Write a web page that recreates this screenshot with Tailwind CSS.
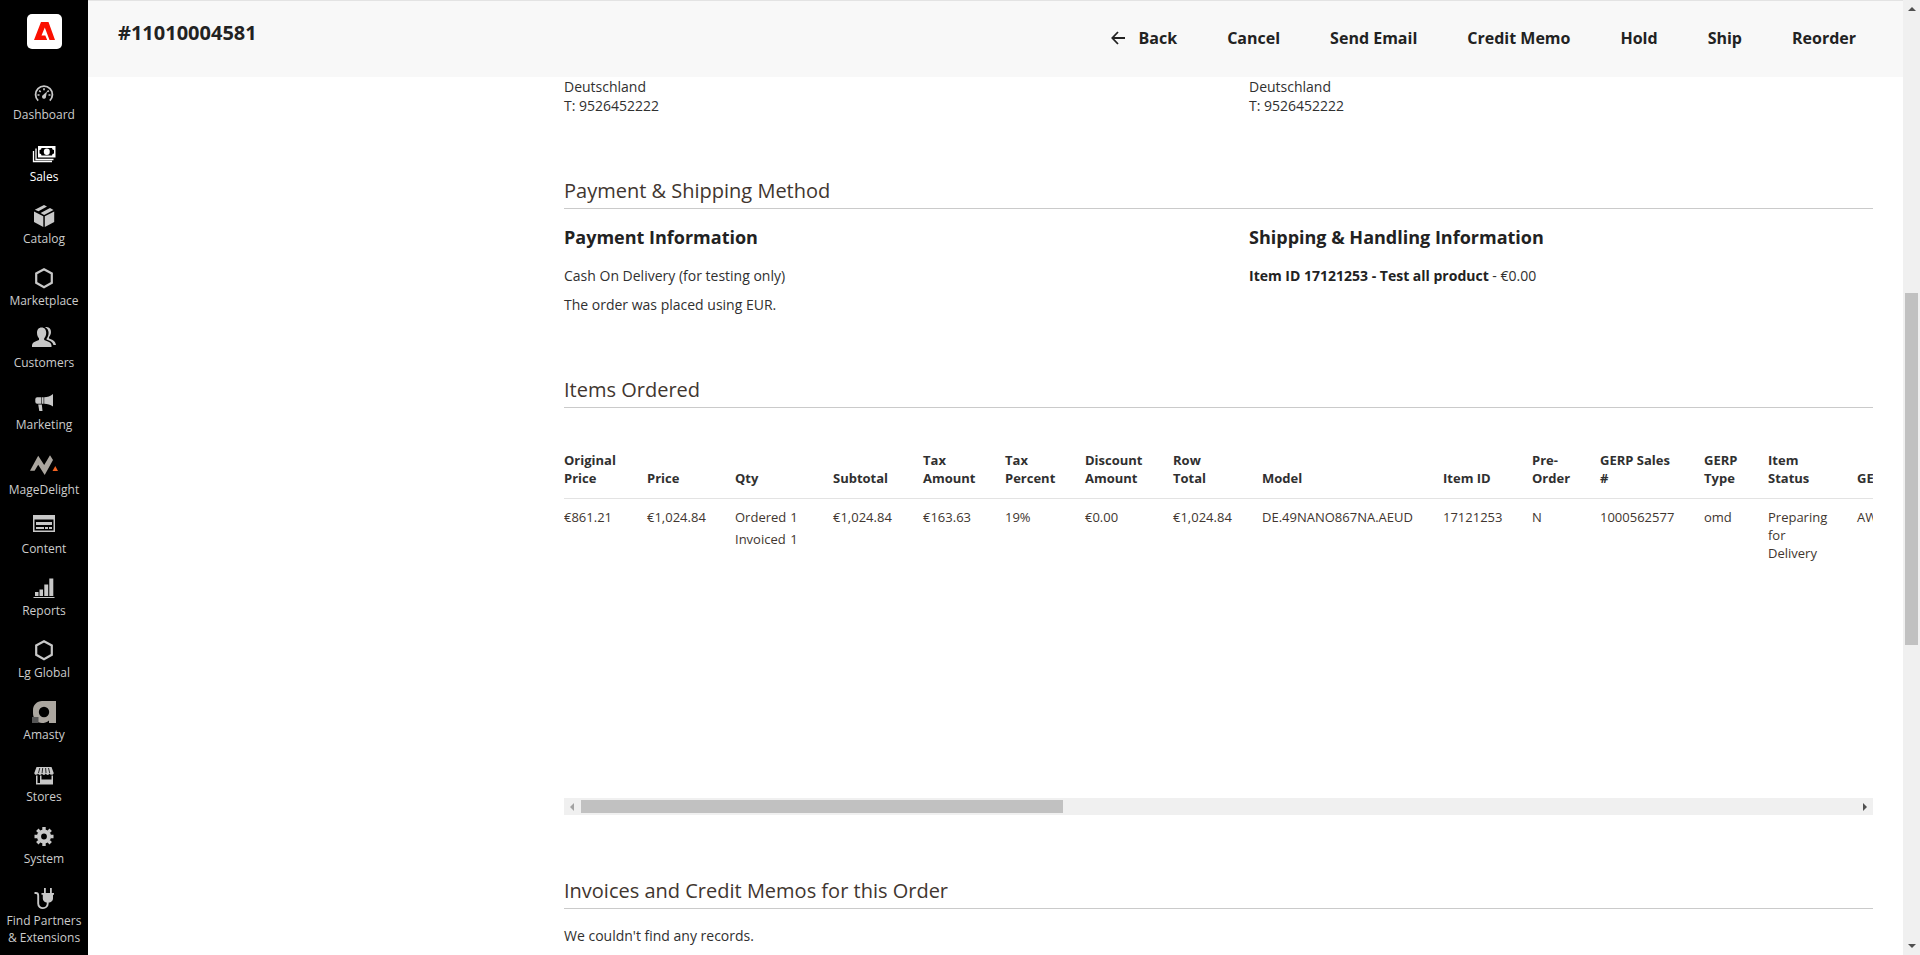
<!DOCTYPE html>
<html lang="en">
<head>
<meta charset="utf-8">
<title>#11010004581</title>
<script src="https://cdn.jsdelivr.net/npm/@tailwindcss/browser@4"></script>
</head>
<body class="flex h-screen overflow-hidden bg-white font-['Open_Sans',sans-serif] text-sm leading-[19px] text-[#303030]">

<nav aria-label="Main menu" class="flex w-[88px] shrink-0 flex-col items-center bg-black text-xs leading-[17px] text-[#cccccc]">
  <a href="#" aria-label="Home" class="mt-[14px] mb-[29px]">
    <svg class="block h-[35px] w-[35px]" viewBox="0 0 35 35"><rect width="35" height="35" rx="5" fill="#fff"/><path d="M14 8h7.500L28 26h-5.500L17.800 13.500l-3.300 8h3.800l1.900 4.500H7z" fill="#fa0f00"/></svg>
  </a>
  <ul class="flex w-full flex-col gap-[17px] text-center">
    <li><a href="#" class="flex flex-col items-center">
      <svg class="h-7 w-7" viewBox="0 0 28 28" fill="none" stroke="#c8c8c8"><path d="M8.200 22.600A8.400 8.400 0 1 1 19.800 22.600" stroke-width="1.800"/><path d="M7.500 17h2M18.500 17h2M9.200 12.600l1.500 1.200M18.800 12.600l-1.500 1.200M14 10.200v2" stroke-width="1.700"/><path d="M17 13.500l-1 5a2 2 0 1 1-3-1.500z" fill="#c8c8c8" stroke="none"/></svg>
      Dashboard</a></li>
    <li><a href="#" class="flex flex-col items-center text-white">
      <svg class="h-7 w-7" viewBox="0 0 28 28"><path d="M8 6h17.500v11.500H8z" fill="#fff"/><path d="M11.500 8h10.500a2 2 0 0 0 2 2v3.500a2 2 0 0 0-2 2H11.500a2 2 0 0 0-2-2V10a2 2 0 0 0 2-2z" fill="#000"/><ellipse cx="16.800" cy="11.800" rx="3" ry="3.200" fill="#fff"/><path d="M6 8.500v11h17.500M3.500 11v10.500H22" fill="none" stroke="#fff" stroke-width="1.300"/></svg>
      Sales</a></li>
    <li><a href="#" class="flex flex-col items-center">
      <svg class="h-7 w-7" viewBox="0 0 28 28" fill="#c8c8c8"><path d="M4 9.500l9.300 4.700V25L4 20zM24.200 9.500l-9.400 4.700V25l9.400-5z"/><path d="M14 3l3 1.500-8.500 4.700-3.700-1.400zM20 6l3.500 1.900-9.400 5-3.500-1.800z"/></svg>
      Catalog</a></li>
    <li><a href="#" class="flex flex-col items-center">
      <svg class="h-7 w-7" viewBox="0 0 28 28"><path d="M14 5.200l7.800 4.300v9.300L14 23.200l-7.800-4.400V9.500z" fill="none" stroke="#c8c8c8" stroke-width="2.200"/></svg>
      Marketplace</a></li>
    <li><a href="#" class="flex flex-col items-center">
      <svg class="h-7 w-7" viewBox="0 0 28 28" fill="#c8c8c8"><path d="M11.600 1.500c3 0 4.600 2.200 4.600 5.300 0 2.300-.8 4.200-2 5.500v1.800c3.600 1.200 6.800 2.300 7.300 5.200V21H2v-1.700c.5-2.900 3.500-4 7-5.200v-1.800c-1.200-1.300-2-3.200-2-5.500 0-3.100 1.600-5.300 4.600-5.300z"/><path d="M15 1.200c4-.9 6 1.600 6 4.800 0 2.100-.8 3.800-2 5v1.400c3.500 1.200 6.500 2.300 7 6.600h-2.500c-.8-3.300-3.300-4.500-7-5.600v-.6c1.300-1.500 2.100-3.600 2.100-6 0-2.400-1.100-4.400-3.600-5.600z"/></svg>
      Customers</a></li>
    <li><a href="#" class="flex flex-col items-center">
      <svg class="h-7 w-7" viewBox="0 0 28 28" fill="#c8c8c8"><path d="M11 9.300v6.500H7.200a2 2 0 0 1-1.900-2v-2.500a2 2 0 0 1 1.900-2zM11.600 9.300h2v6.500h-2zM14.200 9.200c3.400 0 6-1 8.800-3.200v12.500c-2.800-1.800-5.400-2.700-8.800-2.700zM8.200 16.500h3.600l.7 6.500H9.300z"/></svg>
      Marketing</a></li>
    <li><a href="#" class="flex flex-col items-center">
      <svg class="h-[31px] w-7" viewBox="0 0 28 31"><path d="M0 20.700L8.200 5.700 14.200 15 20 5.300 23 10 14.700 25 8.200 14.700 4.600 20.700z" fill="#aba69f"/><path d="M25.300 16L28 21h-5.500z" fill="#f26322"/></svg>
      MageDelight</a></li>
    <li><a href="#" class="flex flex-col items-center">
      <svg class="h-[25px] w-7" viewBox="0 0 28 25"><path fill="#c8c8c8" fill-rule="evenodd" d="M3 0h22v17H3zM4.500 4.500v11h19v-11z"/><path fill="#c8c8c8" d="M6 7h16v3H6zM6 12h8v2H6zM15 12h3v2h-3zM19 12h3v2h-3z"/></svg>
      Content</a></li>
    <li><a href="#" class="flex flex-col items-center">
      <svg class="h-7 w-7" viewBox="0 0 28 28" fill="#c8c8c8"><path d="M3.500 23h21v1h-21zM5 18h3.500v4H5zM9.500 15.500H13V22H9.500zM14.300 10.500h3.900V22h-3.900zM19.300 4.500h4V22h-4z"/></svg>
      Reports</a></li>
    <li><a href="#" class="flex flex-col items-center">
      <svg class="h-7 w-7" viewBox="0 0 28 28"><path d="M14 5.200l7.800 4.300v9.300L14 23.200l-7.800-4.400V9.500z" fill="none" stroke="#c8c8c8" stroke-width="2.200"/></svg>
      Lg Global</a></li>
    <li><a href="#" class="flex flex-col items-center">
      <svg class="h-7 w-7" viewBox="0 0 28 28"><path d="M12 3h14v22h-7v-2.500c-2 2-5 2.500-7 2.500-5 0-9-4-9-10V12c0-5 4-9 9-9z" fill="#aba69f"/><circle cx="14" cy="14" r="5.200" fill="#000"/><path d="M2 19h6.500v6H2z" fill="#555"/></svg>
      Amasty</a></li>
    <li><a href="#" class="flex flex-col items-center">
      <svg class="h-7 w-7" viewBox="0 0 28 28"><path d="M6.500 7h15l2.200 6c0 2-3.200 2.500-4 .6-.8 1.800-3.300 1.800-3.900 0-.6 1.800-3.200 1.800-3.800 0-.8 1.800-3.200 1.800-4 0-.8 1.900-3.800 1.400-3.700-.6z" fill="#c8c8c8"/><path d="M9.800 8l-1.300 5M12.700 8l-.6 5M15.600 8l.4 5M18.500 8l1.200 5" stroke="#000" stroke-width=".8"/><path fill="#c8c8c8" fill-rule="evenodd" d="M6 15.500h1.500V23H10v-7.500h1.500v4h10v-4H23v9H6z"/></svg>
      Stores</a></li>
    <li><a href="#" class="flex flex-col items-center">
      <svg class="h-7 w-7" viewBox="0 0 28 28"><circle cx="14" cy="14.500" r="5" fill="none" stroke="#c8c8c8" stroke-width="4.200"/><path d="M14 5v3M14 21v3M4.500 14.500h3M20.500 14.500h3M7.300 7.800l2.100 2.100M18.600 19.100l2.100 2.100M20.700 7.800l-2.100 2.100M9.400 19.100l-2.100 2.100" stroke="#c8c8c8" stroke-width="3.400"/></svg>
      System</a></li>
    <li><a href="#" class="flex flex-col items-center">
      <svg class="h-7 w-7" viewBox="0 0 28 28"><path d="M11.500 9h12.500v1.700h-1v3.800c0 2-1.500 3.500-3.500 4h-3.200c-2-.5-3.500-2-3.500-4v-3.800h-1.300zM14 4h1.800v5H14zM20 4h1.800v5H20z" fill="#c8c8c8"/><path d="M4.500 9h1.300a2.400 2.400 0 0 1 2.400 2.400V19.500c0 6.200 9.500 6 9.500 0v-2" fill="none" stroke="#c8c8c8" stroke-width="1.900"/></svg>
      Find Partners<br>&amp; Extensions</a></li>
  </ul>
</nav>

<div class="flex min-w-0 flex-1 flex-col">
  <header class="flex h-[77px] shrink-0 justify-between border-t border-[#e3e3e3] bg-[#f8f8f8] pr-[47px] pl-[30px] text-[#222]">
    <h1 class="pt-[18px] text-xl leading-[27px] font-bold">#11010004581</h1>
    <div class="flex h-[74px] items-center gap-[50px] text-base font-bold">
      <button type="button" class="flex items-center gap-[14px]"><svg class="h-[14px] w-[14px]" viewBox="0 0 14 14" fill="none" stroke="#222" stroke-width="1.800"><path d="M7 1L1.300 7 7 13M1.500 7H14"/></svg>Back</button>
      <button type="button">Cancel</button>
      <button type="button">Send Email</button>
      <button type="button">Credit Memo</button>
      <button type="button">Hold</button>
      <button type="button">Ship</button>
      <button type="button">Reorder</button>
    </div>
  </header>

  <div class="flex min-h-0 flex-1 overflow-hidden px-[30px]">
    <div class="w-[446px] shrink-0"></div>
    <main class="min-w-0 flex-1">
      <section class="grid grid-cols-2 gap-x-[61px]">
        <address class="not-italic">Deutschland<br>T: 9526452222</address>
        <address class="not-italic">Deutschland<br>T: 9526452222</address>
      </section>

      <section class="mt-[62px]">
        <h2 class="border-b border-[#cacaca] pb-1 text-xl leading-[27px] text-[#41362f]">Payment &amp; Shipping Method</h2>
        <div class="mt-4 grid grid-cols-2 gap-x-[61px]">
          <div>
            <h3 class="text-lg leading-6 font-bold text-[#222]">Payment Information</h3>
            <p class="mt-[17px]">Cash On Delivery (for testing only)</p>
            <p class="mt-[10px]">The order was placed using EUR.</p>
          </div>
          <div>
            <h3 class="text-lg leading-6 font-bold text-[#222]">Shipping &amp; Handling Information</h3>
            <p class="mt-[17px]"><strong class="font-bold text-[#222]">Item ID 17121253 - Test all product</strong> - €0.00</p>
          </div>
        </div>
      </section>

      <section class="mt-[62px]">
        <h2 class="border-b border-[#cacaca] pb-1 text-xl leading-[27px] text-[#41362f]">Items Ordered</h2>
        <div class="mt-[33px] h-[357px] overflow-hidden">
          <table class="w-[1353px] table-fixed text-left text-[13px] leading-[18px]">
            <colgroup>
              <col class="w-[83px]"><col class="w-[88px]"><col class="w-[98px]"><col class="w-[90px]"><col class="w-[82px]">
              <col class="w-[80px]"><col class="w-[88px]"><col class="w-[89px]"><col class="w-[181px]"><col class="w-[89px]">
              <col class="w-[68px]"><col class="w-[104px]"><col class="w-[64px]"><col class="w-[89px]"><col class="w-[60px]">
            </colgroup>
            <thead class="border-b border-[#e3e3e3] align-bottom text-[#303030] [&_th]:pt-[10px] [&_th]:pb-[11px] [&_th]:font-bold">
              <tr>
                <th>Original<br>Price</th><th>Price</th><th>Qty</th><th>Subtotal</th><th>Tax<br>Amount</th>
                <th>Tax<br>Percent</th><th>Discount<br>Amount</th><th>Row<br>Total</th><th>Model</th><th>Item ID</th>
                <th>Pre-<br>Order</th><th>GERP Sales<br>#</th><th>GERP<br>Type</th><th>Item<br>Status</th><th>GE</th>
              </tr>
            </thead>
            <tbody class="align-top text-[#41362f] [&_td]:pt-[9px]">
              <tr>
                <td>€861.21</td><td>€1,024.84</td>
                <td><dl class="grid w-max grid-cols-[auto_auto] gap-x-1 gap-y-1"><dt>Ordered</dt><dd>1</dd><dt>Invoiced</dt><dd>1</dd></dl></td>
                <td>€1,024.84</td><td>€163.63</td><td>19%</td><td>€0.00</td><td>€1,024.84</td>
                <td>DE.49NANO867NA.AEUD</td><td>17121253</td><td>N</td><td>1000562577</td><td>omd</td>
                <td>Preparing<br>for<br>Delivery</td><td>AW</td>
              </tr>
            </tbody>
          </table>
        </div>
        <div class="flex h-[17px] items-center bg-[#f0f0f0] px-[6px]" aria-hidden="true">
          <svg class="mr-[7px] h-[8px] w-[4px]" viewBox="0 0 4 8"><path d="M4 0v8L0 4z" fill="#a3a3a3"/></svg>
          <div class="h-[13px] w-[482px] bg-[#c1c1c1]"></div>
          <svg class="ml-auto h-[8px] w-[4px]" viewBox="0 0 4 8"><path d="M0 0v8l4-4z" fill="#505050"/></svg>
        </div>
      </section>

      <section class="mt-[62px]">
        <h2 class="border-b border-[#cacaca] pb-1 text-xl leading-[27px] text-[#41362f]">Invoices and Credit Memos for this Order</h2>
        <p class="mt-[17px]">We couldn't find any records.</p>
      </section>
    </main>
  </div>
</div>

<div class="flex w-[17px] shrink-0 flex-col items-center bg-[#f0f0f0] py-[7px]" aria-hidden="true">
  <svg class="h-[4px] w-[8px]" viewBox="0 0 8 4"><path d="M0 4h8L4 0z" fill="#505050"/></svg>
  <div class="mt-[282px] h-[352px] w-[13px] bg-[#c1c1c1]"></div>
  <svg class="mt-auto h-[4px] w-[8px]" viewBox="0 0 8 4"><path d="M0 0h8L4 4z" fill="#505050"/></svg>
</div>

</body>
</html>
